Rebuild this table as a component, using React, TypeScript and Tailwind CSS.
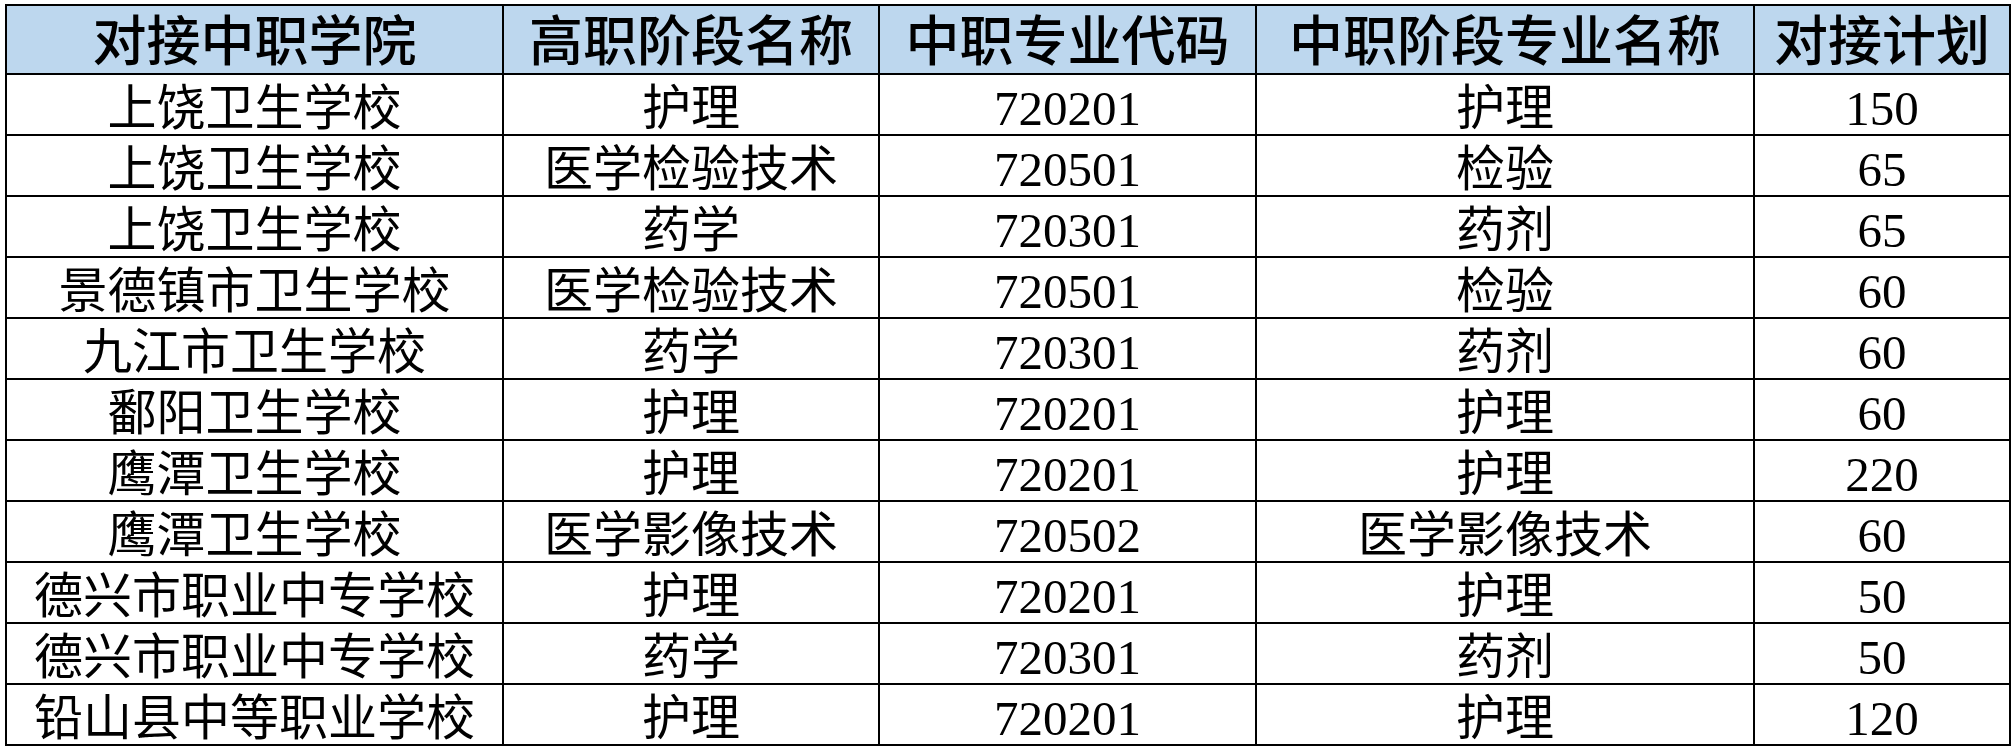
import React from "react";

const rows: [string, string, string, string, string][] = [
  ["上饶卫生学校", "护理", "720201", "护理", "150"],
  ["上饶卫生学校", "医学检验技术", "720501", "检验", "65"],
  ["上饶卫生学校", "药学", "720301", "药剂", "65"],
  ["景德镇市卫生学校", "医学检验技术", "720501", "检验", "60"],
  ["九江市卫生学校", "药学", "720301", "药剂", "60"],
  ["鄱阳卫生学校", "护理", "720201", "护理", "60"],
  ["鹰潭卫生学校", "护理", "720201", "护理", "220"],
  ["鹰潭卫生学校", "医学影像技术", "720502", "医学影像技术", "60"],
  ["德兴市职业中专学校", "护理", "720201", "护理", "50"],
  ["德兴市职业中专学校", "药学", "720301", "药剂", "50"],
  ["铅山县中等职业学校", "护理", "720201", "护理", "120"],
];

const headers = ["对接中职学院", "高职阶段名称", "中职专业代码", "中职阶段专业名称", "对接计划"];

const font = { fontFamily: '"Liberation Serif", "Noto Sans CJK SC", serif' };

export default function App() {
  return (
    <div className="w-[2013px] h-[749px] bg-white pt-[4px] pl-[5px]" style={font}>
      <div className="grid grid-cols-[497px_376px_377px_498px_256px] w-fit border-l-2 border-t-2 border-black">
        {headers.map((h) => (
          <div
            key={h}
            className="h-[69px] bg-[#bdd7ee] border-r-2 border-b-2 border-black flex items-center justify-center pt-[6px] text-[54px] font-medium text-black leading-none whitespace-nowrap"
          >
            {h}
          </div>
        ))}
        {rows.map((r, i) =>
          r.map((c, j) => (
            <div
              key={i + "-" + j}
              className="h-[61px] border-r-2 border-b-2 border-black flex items-center justify-center pt-[8px] text-[49px] text-black leading-none whitespace-nowrap"
            >
              {c}
            </div>
          ))
        )}
      </div>
    </div>
  );
}
